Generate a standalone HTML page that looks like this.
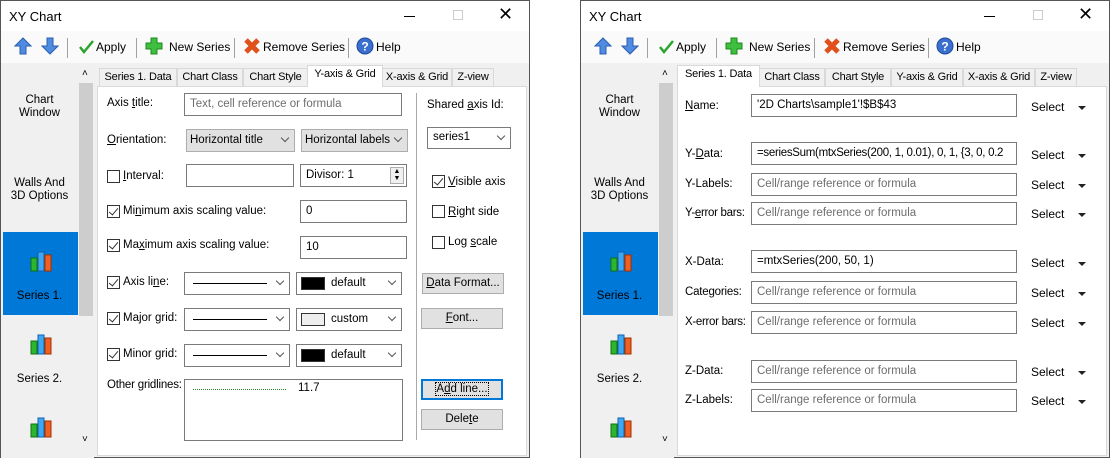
<!DOCTYPE html>
<html><head><meta charset="utf-8"><style>
*{box-sizing:border-box;margin:0;padding:0}
body{width:1112px;height:460px;background:#fff;position:relative;overflow:hidden;font-family:"Liberation Sans",sans-serif;font-size:11.5px;color:#000}
.a{position:absolute}
.win{position:absolute;top:0;width:530px;height:458px;border:1px solid #555;background:#f0f0f0}
.title{position:absolute;left:0;top:0;width:100%;height:30px;background:#fff}
.tb{position:absolute;left:0;top:30px;width:100%;height:32px;background:#fafafa}
.sep{position:absolute;top:7px;width:1px;height:20px;background:#a0a0a0}
.t{position:absolute;white-space:nowrap}
.side{position:absolute;left:0;top:62px;width:77px;height:395px;background:#f0f0f0}
.sb{position:absolute;left:77px;top:62px;width:16px;height:395px;background:#f0f0f0}
.tab{position:absolute;top:67px;height:19px;border:1px solid #d9d9d9;border-bottom:none;background:#f0f0f0;font-size:11px;letter-spacing:-0.2px;text-align:center;line-height:17px;white-space:nowrap;overflow:hidden}
.tab.on{top:64px;height:22px;background:#fff;border-color:#d9d9d9;z-index:2}
.panel{position:absolute;top:85px;width:430px;height:370px;background:#fff;border:1px solid #d9d9d9}
.in{position:absolute;border:1px solid #7a7a7a;background:#fff;height:23px;padding-left:5px;line-height:20px;white-space:nowrap;overflow:hidden}
.ph{color:#6d6d6d}
.cb{position:absolute;border:1px solid #adadad;background:#e1e1e1;height:23px;padding-left:3px;line-height:20px;white-space:nowrap;overflow:hidden}
.cw{position:absolute;border:1px solid #7a7a7a;background:#fff;height:23px}
.chev{position:absolute;right:6px;top:5px;width:6px;height:6px;border-right:1px solid #555;border-bottom:1px solid #555;transform:rotate(45deg)}
.chk{position:absolute;width:13px;height:13px;border:1px solid #333;background:#fff}
.chk.c::after{content:"";position:absolute;left:3px;top:0px;width:4px;height:8px;border-right:1.5px solid #333;border-bottom:1.5px solid #333;transform:rotate(40deg)}
.btn{position:absolute;height:21px;border:1px solid #adadad;background:#e1e1e1;text-align:center;line-height:19px}
.line{position:absolute;left:8px;top:10px;width:74px;height:1px;background:#000}
.sw{position:absolute;left:4px;top:4px;width:24px;height:13px;border:1px solid #333}
.sel{position:absolute;font-size:12px}
.tri{position:absolute;width:0;height:0;border-left:4px solid transparent;border-right:4px solid transparent;border-top:4px solid #222}
u{text-decoration:underline}
.tbt{font-size:12px}
</style></head><body>

<!-- ===== LEFT WINDOW ===== -->
<div class="win" style="left:0">
 <div class="title"><div class="t" style="left:8px;top:8px;font-size:13px">XY Chart</div>
  <div class="a" style="left:403px;top:15px;width:11px;height:1px;background:#000"></div>
  <div class="a" style="left:452px;top:9px;width:10px;height:10px;border:1px solid #ccc"></div>
  <div class="t" style="left:497px;top:3px;font-size:18px;font-weight:300">✕</div>
 </div>
 <div class="tb">
  <svg class="a" style="left:13px;top:6px" width="18" height="18"><path d="M9 1 L17 9 H12 V17 H6 V9 H1 Z" fill="#4f8be0" stroke="#2a5fb0"/></svg>
  <svg class="a" style="left:40px;top:6px" width="18" height="18"><path d="M9 17 L17 9 H12 V1 H6 V9 H1 Z" fill="#4f8be0" stroke="#2a5fb0"/></svg>
  <div class="sep" style="left:66px"></div>
  <svg class="a" style="left:77px;top:8px" width="16" height="16"><path d="M2 8 L6 13 L15 2" fill="none" stroke="#2ca52c" stroke-width="2.5"/></svg>
  <div class="t tbt" style="left:95px;top:9px">Apply</div>
  <div class="sep" style="left:135px"></div>
  <svg class="a" style="left:144px;top:6px" width="18" height="18"><path d="M6 1H12V6H17V12H12V17H6V12H1V6H6Z" fill="#3fbf3f" stroke="#1d8a1d"/></svg>
  <div class="t tbt" style="left:168px;top:9px">New Series</div>
  <div class="sep" style="left:233px"></div>
  <svg class="a" style="left:242px;top:6px" width="18" height="18"><path d="M3 3L15 15M15 3L3 15" stroke="#e0501c" stroke-width="5"/></svg>
  <div class="t tbt" style="left:262px;top:9px">Remove Series</div>
  <div class="sep" style="left:347px"></div>
  <svg class="a" style="left:355px;top:6px" width="18" height="18"><circle cx="9" cy="9" r="8" fill="#3a6fd0" stroke="#1d4a9a"/><text x="9" y="13.5" font-size="12" font-weight="bold" fill="#fff" text-anchor="middle" font-family="Liberation Sans">?</text></svg>
  <div class="t tbt" style="left:375px;top:9px">Help</div>
 </div>
 <div class="side">
  <div class="t" style="left:0;width:77px;top:31px;text-align:center;line-height:13px">Chart<br>Window</div>
  <div class="t" style="left:0;width:77px;top:114px;text-align:center;line-height:13px">Walls And<br>3D Options</div>
  <div class="a" style="left:2px;top:169px;width:75px;height:83px;background:#0078d7"></div>
  <svg class="a" style="left:29px;top:187px" width="24" height="24"><rect x="1" y="8" width="6" height="13" fill="#2db52d" stroke="#107010"/><rect x="8" y="2" width="6" height="19" fill="#3da8f0" stroke="#1060b0"/><rect x="15" y="5" width="6" height="16" fill="#f06020" stroke="#a03000"/></svg>
  <div class="t" style="left:0;width:77px;top:227px;text-align:center">Series 1.</div>
  <svg class="a" style="left:29px;top:270px" width="24" height="24"><rect x="1" y="8" width="6" height="13" fill="#2db52d" stroke="#107010"/><rect x="8" y="2" width="6" height="19" fill="#3da8f0" stroke="#1060b0"/><rect x="15" y="5" width="6" height="16" fill="#f06020" stroke="#a03000"/></svg>
  <div class="t" style="left:0;width:77px;top:310px;text-align:center">Series 2.</div>
  <svg class="a" style="left:29px;top:353px" width="24" height="24"><rect x="1" y="8" width="6" height="13" fill="#2db52d" stroke="#107010"/><rect x="8" y="2" width="6" height="19" fill="#3da8f0" stroke="#1060b0"/><rect x="15" y="5" width="6" height="16" fill="#f06020" stroke="#a03000"/></svg>
 </div>
 <div class="sb"><div class="t" style="left:4px;top:5px;font-size:10px">˄</div>
  <div class="a" style="left:1px;top:20px;width:14px;height:233px;background:#cdcdcd"></div>
  <div class="t" style="left:4px;top:371px;font-size:10px">˅</div></div>
 <div class="tab" style="left:98px;width:78px">Series 1. Data</div>
 <div class="tab" style="left:176px;width:66px">Chart Class</div>
 <div class="tab" style="left:242px;width:65px">Chart Style</div>
 <div class="tab on" style="left:306px;width:76px">Y-axis &amp; Grid</div>
 <div class="tab" style="left:381px;width:70px">X-axis &amp; Grid</div>
 <div class="tab" style="left:451px;width:42px">Z-view</div>
 <div class="panel" style="left:96px">
  <div class="t" style="left:9px;top:10px">Axis <u>t</u>itle:</div>
  <div class="in ph" style="left:86px;top:6px;width:218px">Text, cell reference or formula</div>
  <div class="t" style="left:9px;top:47px"><u>O</u>rientation:</div>
  <div class="cb" style="left:88px;top:42px;width:109px">Horizontal title<div class="chev"></div></div>
  <div class="cb" style="left:203px;top:42px;width:107px">Horizontal labels<div class="chev"></div></div>
  <div class="chk" style="left:9px;top:83px"></div><div class="t" style="left:25px;top:83px"><u>I</u>nterval:</div>
  <div class="in" style="left:88px;top:77px;width:108px"></div>
  <div class="in" style="left:202px;top:77px;width:107px">Divisor: 1</div>
  <div class="a" style="left:292px;top:80px;width:14px;height:17px;border:1px solid #adadad;background:#f0f0f0;font-size:7px;line-height:7px;text-align:center">▲<br>▼</div>
  <div class="chk c" style="left:9px;top:118px"></div><div class="t" style="left:25px;top:118px">Mi<u>n</u>imum axis scaling value:</div>
  <div class="in" style="left:202px;top:113px;width:107px">0</div>
  <div class="chk c" style="left:9px;top:152px"></div><div class="t" style="left:25px;top:152px">Ma<u>x</u>imum axis scaling value:</div>
  <div class="in" style="left:202px;top:149px;width:107px">10</div>
  <div class="chk c" style="left:9px;top:189px"></div><div class="t" style="left:25px;top:189px">Axis li<u>n</u>e:</div>
  <div class="cw" style="left:86px;top:185px;width:106px"><div class="line"></div><div class="chev"></div></div>
  <div class="cw" style="left:198px;top:185px;width:106px"><div class="sw" style="background:#000"></div><div class="t" style="left:34px;top:4px">default</div><div class="chev"></div></div>
  <div class="chk c" style="left:9px;top:225px"></div><div class="t" style="left:25px;top:225px">Major <u>g</u>rid:</div>
  <div class="cw" style="left:86px;top:221px;width:106px"><div class="line"></div><div class="chev"></div></div>
  <div class="cw" style="left:198px;top:221px;width:106px"><div class="sw" style="background:#eee"></div><div class="t" style="left:34px;top:4px">custom</div><div class="chev"></div></div>
  <div class="chk c" style="left:9px;top:261px"></div><div class="t" style="left:25px;top:261px">Minor grid:</div>
  <div class="cw" style="left:86px;top:257px;width:106px"><div class="line"></div><div class="chev"></div></div>
  <div class="cw" style="left:198px;top:257px;width:106px"><div class="sw" style="background:#000"></div><div class="t" style="left:34px;top:4px">default</div><div class="chev"></div></div>
  <div class="t" style="left:9px;top:292px;letter-spacing:-0.2px">Other gridlines:</div>
  <div class="a" style="left:86px;top:292px;width:219px;height:62px;border:1px solid #7a7a7a">
   <div class="a" style="left:8px;top:9px;width:93px;border-top:1px dotted #2a8a2a"></div>
   <div class="t" style="left:113px;top:2px">11.7</div></div>
  <div class="a" style="left:318px;top:6px;width:1px;height:347px;background:#aaa"></div>
  <div class="t" style="left:329px;top:12px">Shared <u>a</u>xis Id:</div>
  <div class="cw" style="left:329px;top:40px;width:84px;height:22px"><div class="t" style="left:5px;top:3px">series1</div><div class="chev"></div></div>
  <div class="chk c" style="left:334px;top:88px"></div><div class="t" style="left:350px;top:89px"><u>V</u>isible axis</div>
  <div class="chk" style="left:334px;top:118px"></div><div class="t" style="left:350px;top:119px"><u>R</u>ight side</div>
  <div class="chk" style="left:334px;top:149px"></div><div class="t" style="left:350px;top:149px">Log <u>s</u>cale</div>
  <div class="btn" style="left:324px;top:186px;width:82px"><u>D</u>ata Format...</div>
  <div class="btn" style="left:323px;top:221px;width:82px"><u>F</u>ont...</div>
  <div class="btn" style="left:323px;top:292px;width:82px;border:2px solid #0078d7;line-height:17px"><span style="outline:1px dotted #000">A<u>d</u>d line...</span></div>
  <div class="btn" style="left:323px;top:322px;width:82px">Dele<u>t</u>e</div>
 </div>
</div>

<!-- ===== RIGHT WINDOW ===== -->
<div class="win" style="left:580px">
 <div class="title"><div class="t" style="left:8px;top:8px;font-size:13px">XY Chart</div>
  <div class="a" style="left:403px;top:15px;width:11px;height:1px;background:#000"></div>
  <div class="a" style="left:452px;top:9px;width:10px;height:10px;border:1px solid #ccc"></div>
  <div class="t" style="left:497px;top:3px;font-size:18px;font-weight:300">✕</div>
 </div>
 <div class="tb">
  <svg class="a" style="left:13px;top:6px" width="18" height="18"><path d="M9 1 L17 9 H12 V17 H6 V9 H1 Z" fill="#4f8be0" stroke="#2a5fb0"/></svg>
  <svg class="a" style="left:40px;top:6px" width="18" height="18"><path d="M9 17 L17 9 H12 V1 H6 V9 H1 Z" fill="#4f8be0" stroke="#2a5fb0"/></svg>
  <div class="sep" style="left:66px"></div>
  <svg class="a" style="left:77px;top:8px" width="16" height="16"><path d="M2 8 L6 13 L15 2" fill="none" stroke="#2ca52c" stroke-width="2.5"/></svg>
  <div class="t tbt" style="left:95px;top:9px">Apply</div>
  <div class="sep" style="left:135px"></div>
  <svg class="a" style="left:144px;top:6px" width="18" height="18"><path d="M6 1H12V6H17V12H12V17H6V12H1V6H6Z" fill="#3fbf3f" stroke="#1d8a1d"/></svg>
  <div class="t tbt" style="left:168px;top:9px">New Series</div>
  <div class="sep" style="left:233px"></div>
  <svg class="a" style="left:242px;top:6px" width="18" height="18"><path d="M3 3L15 15M15 3L3 15" stroke="#e0501c" stroke-width="5"/></svg>
  <div class="t tbt" style="left:262px;top:9px">Remove Series</div>
  <div class="sep" style="left:347px"></div>
  <svg class="a" style="left:355px;top:6px" width="18" height="18"><circle cx="9" cy="9" r="8" fill="#3a6fd0" stroke="#1d4a9a"/><text x="9" y="13.5" font-size="12" font-weight="bold" fill="#fff" text-anchor="middle" font-family="Liberation Sans">?</text></svg>
  <div class="t tbt" style="left:375px;top:9px">Help</div>
 </div>
 <div class="side">
  <div class="t" style="left:0;width:77px;top:31px;text-align:center;line-height:13px">Chart<br>Window</div>
  <div class="t" style="left:0;width:77px;top:114px;text-align:center;line-height:13px">Walls And<br>3D Options</div>
  <div class="a" style="left:2px;top:169px;width:75px;height:83px;background:#0078d7"></div>
  <svg class="a" style="left:29px;top:187px" width="24" height="24"><rect x="1" y="8" width="6" height="13" fill="#2db52d" stroke="#107010"/><rect x="8" y="2" width="6" height="19" fill="#3da8f0" stroke="#1060b0"/><rect x="15" y="5" width="6" height="16" fill="#f06020" stroke="#a03000"/></svg>
  <div class="t" style="left:0;width:77px;top:227px;text-align:center">Series 1.</div>
  <svg class="a" style="left:29px;top:270px" width="24" height="24"><rect x="1" y="8" width="6" height="13" fill="#2db52d" stroke="#107010"/><rect x="8" y="2" width="6" height="19" fill="#3da8f0" stroke="#1060b0"/><rect x="15" y="5" width="6" height="16" fill="#f06020" stroke="#a03000"/></svg>
  <div class="t" style="left:0;width:77px;top:310px;text-align:center">Series 2.</div>
  <svg class="a" style="left:29px;top:353px" width="24" height="24"><rect x="1" y="8" width="6" height="13" fill="#2db52d" stroke="#107010"/><rect x="8" y="2" width="6" height="19" fill="#3da8f0" stroke="#1060b0"/><rect x="15" y="5" width="6" height="16" fill="#f06020" stroke="#a03000"/></svg>
 </div>
 <div class="sb"><div class="t" style="left:4px;top:5px;font-size:10px">˄</div>
  <div class="a" style="left:1px;top:20px;width:14px;height:233px;background:#cdcdcd"></div>
  <div class="t" style="left:4px;top:371px;font-size:10px">˅</div></div>
 <div class="tab on" style="left:96px;width:83px">Series 1. Data</div>
 <div class="tab" style="left:178px;width:66px">Chart Class</div>
 <div class="tab" style="left:244px;width:66px">Chart Style</div>
 <div class="tab" style="left:310px;width:72px">Y-axis &amp; Grid</div>
 <div class="tab" style="left:382px;width:72px">X-axis &amp; Grid</div>
 <div class="tab" style="left:454px;width:42px">Z-view</div>
 <div class="panel" style="left:96px;width:430px">
  <div class="t" style="left:7px;top:13px"><u>N</u>ame:</div>
  <div class="in" style="left:73px;top:7px;width:266px">'2D Charts\sample1'!$B$43</div>
  <div class="t" style="left:7px;top:61px">Y-<u>D</u>ata:</div>
  <div class="in" style="left:73px;top:55px;width:266px;letter-spacing:-0.3px">=seriesSum(mtxSeries(200, 1, 0.01), 0, 1, {3, 0, 0.2</div>
  <div class="t" style="left:7px;top:91px">Y-Labels:</div>
  <div class="in ph" style="left:73px;top:86px;width:266px">Cell/range reference or formula</div>
  <div class="t" style="left:7px;top:120px;letter-spacing:-0.3px">Y-<u>e</u>rror bars:</div>
  <div class="in ph" style="left:73px;top:115px;width:266px">Cell/range reference or formula</div>
  <div class="t" style="left:7px;top:169px">X-Data:</div>
  <div class="in" style="left:73px;top:163px;width:266px">=mtxSeries(200, 50, 1)</div>
  <div class="t" style="left:7px;top:199px;letter-spacing:-0.2px">Categories:</div>
  <div class="in ph" style="left:73px;top:194px;width:266px">Cell/range reference or formula</div>
  <div class="t" style="left:7px;top:229px;letter-spacing:-0.3px">X-error bars:</div>
  <div class="in ph" style="left:73px;top:224px;width:266px">Cell/range reference or formula</div>
  <div class="t" style="left:7px;top:278px">Z-Data:</div>
  <div class="in ph" style="left:73px;top:273px;width:266px">Cell/range reference or formula</div>
  <div class="t" style="left:7px;top:307px">Z-Labels:</div>
  <div class="in ph" style="left:73px;top:302px;width:266px">Cell/range reference or formula</div>
  <div class="sel" style="left:353px;top:13px">Select</div><div class="tri" style="left:400px;top:19px"></div>
  <div class="sel" style="left:353px;top:61px">Select</div><div class="tri" style="left:400px;top:67px"></div>
  <div class="sel" style="left:353px;top:91px">Select</div><div class="tri" style="left:400px;top:97px"></div>
  <div class="sel" style="left:353px;top:120px">Select</div><div class="tri" style="left:400px;top:126px"></div>
  <div class="sel" style="left:353px;top:169px">Select</div><div class="tri" style="left:400px;top:175px"></div>
  <div class="sel" style="left:353px;top:199px">Select</div><div class="tri" style="left:400px;top:205px"></div>
  <div class="sel" style="left:353px;top:229px">Select</div><div class="tri" style="left:400px;top:235px"></div>
  <div class="sel" style="left:353px;top:278px">Select</div><div class="tri" style="left:400px;top:284px"></div>
  <div class="sel" style="left:353px;top:307px">Select</div><div class="tri" style="left:400px;top:313px"></div>
 </div>
</div>
</body></html>
